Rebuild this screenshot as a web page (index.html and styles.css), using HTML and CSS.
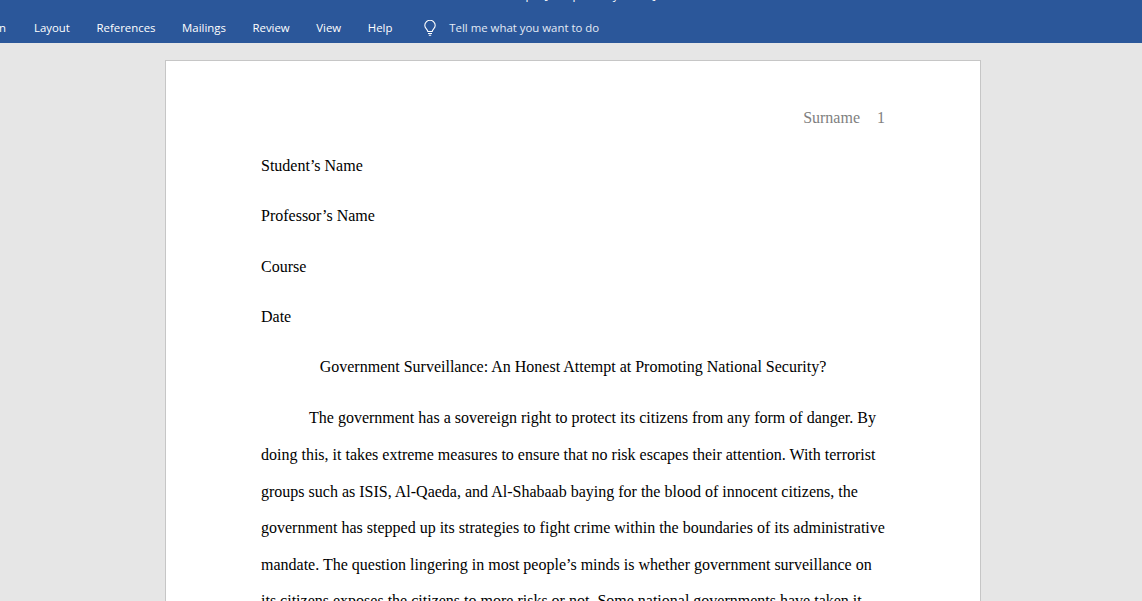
FILE: index.html
```html
<!DOCTYPE html>
<html lang="en">
<head>
    <meta charset="UTF-8">
    <title>Government Surveillance</title>
    <link rel="stylesheet" href="styles.css">
</head>
<body>

<header class="ribbon">
    <div class="doc-title">Surveillance topic [Compatibility Mode] - Word</div>
    <nav class="tabs">
        <span class="tab tab-cut">n</span>
        <span class="tab">Layout</span>
        <span class="tab">References</span>
        <span class="tab">Mailings</span>
        <span class="tab">Review</span>
        <span class="tab">View</span>
        <span class="tab">Help</span>
        <svg class="bulb" width="12" height="16" viewBox="0 0 12 16" fill="none" stroke="#fff" stroke-width="1.1">
            <path d="M3.800 11.500c0-2-3-3-3-6a5.200 5.200 0 0 1 10.400 0c0 3-3 4-3 6z"/>
            <path d="M4 13.500h4M4.800 15.300h2.400"/>
        </svg>
        <span class="tab tell">Tell me what you want to do</span>
    </nav>
</header>

<main class="workspace">
    <div class="page">
        <div class="page-head"><span>Surname</span><span>1</span></div>
        <p class="line">Student’s Name</p>
        <p class="line">Professor’s Name</p>
        <p class="line">Course</p>
        <p class="line">Date</p>
        <p class="line doc-heading">Government Surveillance: An Honest Attempt at Promoting National Security?</p>
        <div class="body-text">
            <div class="first">The government has a sovereign right to protect its citizens from any form of danger. By</div>
            <div>doing this, it takes extreme measures to ensure that no risk escapes their attention. With terrorist</div>
            <div>groups such as ISIS, Al-Qaeda, and Al-Shabaab baying for the blood of innocent citizens, the</div>
            <div>government has stepped up its strategies to fight crime within the boundaries of its administrative</div>
            <div>mandate. The question lingering in most people’s minds is whether government surveillance on</div>
            <div>its citizens exposes the citizens to more risks or not. Some national governments have taken it</div>
        </div>
    </div>
</main>

</body>
</html>
```

FILE: styles.css
```css
html, body {
    margin: 0;
    height: 100%;
    overflow: hidden;
}
body {
    background: #e6e6e6;
    font-family: "Liberation Serif", serif;
}
.ribbon {
    height: 43px;
    background: #2b579a;
    overflow: hidden;
    font-family: "Open Sans", "Noto Sans", sans-serif;
    color: #fff;
}
.doc-title {
    text-align: center;
    font-size: 11.5px;
    line-height: 16px;
    margin-top: -13px;
    height: 16px;
}
.tabs {
    display: flex;
    align-items: center;
    height: 24px;
    margin-top: 12px;
    margin-left: -1px;
    font-size: 11.4px;
}
.tab {
    margin-right: 26.600px;
    white-space: nowrap;
}
.tab-cut {
    margin-right: 28px;
}
.bulb {
    margin-top: 2px;
    margin-right: 13.500px;
    margin-left: 4.800px;
}
.tell {
    color: #e4ebf5;
}
.workspace {
    padding-top: 17px;
}
.page {
    width: 624px;
    height: 600px;
    margin-left: 165px;
    background: #fff;
    border: 1px solid #c6c6c6;
    padding: 48px 95px 0;
    font-size: 16px;
    color: #000;
}
.page-head {
    display: flex;
    justify-content: flex-end;
    gap: 17px;
    color: #7f7f7f;
    line-height: 18px;
    margin-bottom: 30px;
}
.line {
    margin: 0 0 32.300px;
    line-height: 18px;
}
.doc-heading {
    text-align: center;
}
.body-text {
    line-height: 36.600px;
    margin-top: -8px;
}
.body-text div {
    white-space: nowrap;
}
.first {
    text-indent: 48px;
}
```
